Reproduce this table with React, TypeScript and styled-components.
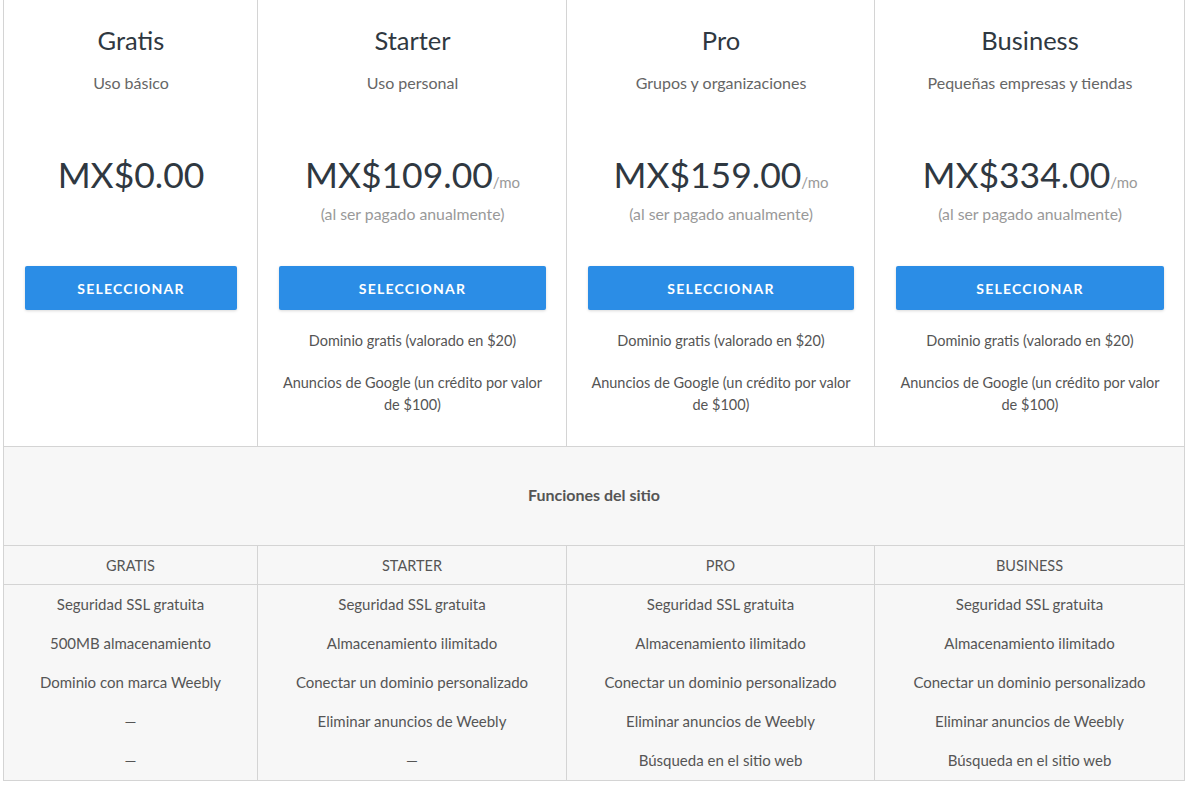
import styled, { createGlobalStyle } from "styled-components";

const GlobalStyle = createGlobalStyle`
  html, body {
    margin: 0;
    padding: 0;
    background: #ffffff;
    font-family: Lato, "Open Sans", sans-serif;
  }
`;

const cols = "254px 309px 308px 311px";
const line = "#d4d4d4";

const Page = styled.div`
  padding-left: 3px;
  width: 1182px;
`;

const Plans = styled.div`
  display: grid;
  grid-template-columns: ${cols};
  border-bottom: 1px solid ${line};
`;

const PlanCard = styled.div<{ $last?: boolean }>`
  display: flex;
  flex-direction: column;
  align-items: center;
  text-align: center;
  padding: 23px 20px 30px 21px;
  border-left: 1px solid ${line};
  border-right: ${(p) => (p.$last ? `1px solid ${line}` : "none")};
  background: #fff;
`;

const Title = styled.h2`
  margin: 0;
  font-size: 25.5px;
  line-height: 34px;
  font-weight: 400;
  color: #2f3841;
`;

const Subtitle = styled.p`
  margin: 15px 0 0;
  font-size: 16px;
  line-height: 22px;
  color: #666;
`;

const PriceBlock = styled.div`
  margin-top: 59px;
  height: 113px;
  display: flex;
  flex-direction: column;
  align-items: center;
`;

const Price = styled.div`
  display: flex;
  align-items: baseline;
  height: 44px;
  font-size: 35.5px;
  line-height: 44px;
  color: #2f3841;
  white-space: nowrap;
`;

const Per = styled.span`
  font-size: 15px;
  line-height: 1;
  color: #999;
`;

const Note = styled.p`
  margin: 6px 0 0;
  font-size: 15.8px;
  line-height: 22px;
  color: #999;
`;

const SelectButton = styled.button`
  width: 100%;
  height: 44px;
  border: none;
  border-radius: 2px;
  background: #2b8de6;
  color: #fff;
  font-family: inherit;
  font-weight: 700;
  font-size: 14px;
  letter-spacing: 1.2px;
  box-shadow: 0 1px 3px rgba(0, 0, 0, 0.15);
  cursor: pointer;
`;

const Perk = styled.p`
  margin: 20px 0 0;
  font-size: 14.5px;
  line-height: 22px;
  color: #555;
`;

const Features = styled.div`
  background: #f7f7f7;
`;

const SectionHead = styled.div`
  height: 99px;
  box-sizing: border-box;
  padding-bottom: 3px;
  display: flex;
  align-items: center;
  justify-content: center;
  font-size: 16px;
  font-weight: 700;
  color: #555;
  border: 1px solid ${line};
  border-top: none;
`;

const Row = styled.div<{ $head?: boolean }>`
  display: grid;
  grid-template-columns: ${cols};
  border-bottom: ${(p) => (p.$head ? `1px solid ${line}` : "none")};
`;

const Cell = styled.div<{ $head?: boolean; $last?: boolean }>`
  height: ${(p) => (p.$head ? "38px" : "39px")};
  box-sizing: border-box;
  padding-bottom: ${(p) => (p.$head ? "0" : "2px")};
  display: flex;
  align-items: center;
  justify-content: center;
  font-size: ${(p) => (p.$head ? "14.5px" : "15px")};
  color: #555;
  text-transform: ${(p) => (p.$head ? "uppercase" : "none")};
  border-left: 1px solid ${line};
  border-right: ${(p) => (p.$last ? `1px solid ${line}` : "none")};
`;

const FeatureBody = styled.div`
  border-bottom: 1px solid ${line};
`;

type Plan = {
  name: string;
  desc: string;
  price: string;
  monthly: boolean;
  perks: string[];
};

const perks = ["Dominio gratis (valorado en $20)", "Anuncios de Google (un crédito por valor de $100)"];

const plans: Plan[] = [
  { name: "Gratis", desc: "Uso básico", price: "MX$0.00", monthly: false, perks: [] },
  { name: "Starter", desc: "Uso personal", price: "MX$109.00", monthly: true, perks },
  { name: "Pro", desc: "Grupos y organizaciones", price: "MX$159.00", monthly: true, perks },
  { name: "Business", desc: "Pequeñas empresas y tiendas", price: "MX$334.00", monthly: true, perks },
];

const featureRows: string[][] = [
  ["Seguridad SSL gratuita", "Seguridad SSL gratuita", "Seguridad SSL gratuita", "Seguridad SSL gratuita"],
  ["500MB almacenamiento", "Almacenamiento ilimitado", "Almacenamiento ilimitado", "Almacenamiento ilimitado"],
  [
    "Dominio con marca Weebly",
    "Conectar un dominio personalizado",
    "Conectar un dominio personalizado",
    "Conectar un dominio personalizado",
  ],
  ["—", "Eliminar anuncios de Weebly", "Eliminar anuncios de Weebly", "Eliminar anuncios de Weebly"],
  ["—", "—", "Búsqueda en el sitio web", "Búsqueda en el sitio web"],
];

export default function App() {
  return (
    <Page>
      <GlobalStyle />
      <Plans>
        {plans.map((p, i) => (
          <PlanCard key={p.name} $last={i === plans.length - 1}>
            <Title>{p.name}</Title>
            <Subtitle>{p.desc}</Subtitle>
            <PriceBlock>
              <Price>
                {p.price}
                {p.monthly && <Per>/mo</Per>}
              </Price>
              {p.monthly && <Note>(al ser pagado anualmente)</Note>}
            </PriceBlock>
            <SelectButton>SELECCIONAR</SelectButton>
            {p.perks.map((perk) => (
              <Perk key={perk}>{perk}</Perk>
            ))}
          </PlanCard>
        ))}
      </Plans>
      <Features>
        <SectionHead>Funciones del sitio</SectionHead>
        <Row $head>
          {plans.map((p, i) => (
            <Cell key={p.name} $head $last={i === plans.length - 1}>
              {p.name}
            </Cell>
          ))}
        </Row>
        <FeatureBody>
          {featureRows.map((r, ri) => (
            <Row key={ri}>
              {r.map((c, ci) => (
                <Cell key={ci} $last={ci === r.length - 1}>
                  {c}
                </Cell>
              ))}
            </Row>
          ))}
        </FeatureBody>
      </Features>
    </Page>
  );
}
